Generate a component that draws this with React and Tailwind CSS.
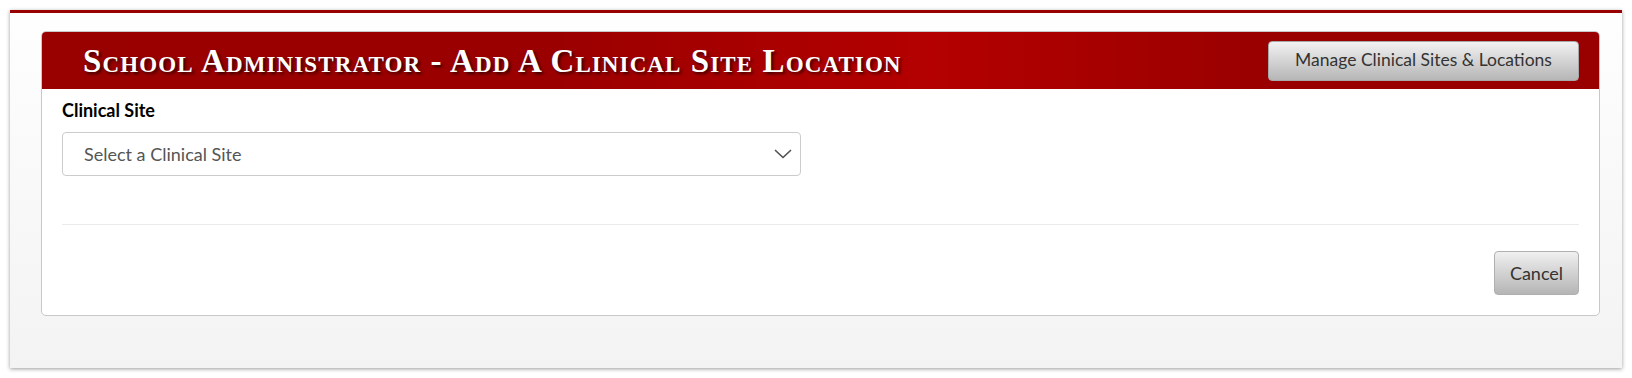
import React from "react";

export default function App() {
  return (
    <div className="w-[1632px] h-[378px] bg-white p-[10px]" style={{ fontFamily: "Lato, 'Liberation Sans', sans-serif" }}>
      <div className="h-[358px] border-t-[3px] border-[#990000] bg-gradient-to-b from-[#fefefe] to-[#f3f3f3] shadow-[0_1px_4px_rgba(0,0,0,0.4)] pl-[31px] pr-[22px] pt-[18px]">
        <div className="rounded-[5px] border border-[#c8c8c8] bg-white overflow-hidden">
          <div className="h-[57px] flex items-center justify-between pl-[41px] pr-[20px] bg-[linear-gradient(to_right,#990000_0%,#9b0000_33%,#b40000_57%,#990000_79%,#990000_100%)]">
            <h1
              className="text-white text-[33px] font-bold leading-none tracking-[1.1px] [font-variant:small-caps] [text-shadow:2px_2px_3px_rgba(0,0,0,0.65)] pt-[2px]"
              style={{ fontFamily: "'Liberation Serif', serif" }}
            >
              School Administrator - Add A Clinical Site Location
            </h1>
            <button className="h-[40px] w-[311px] rounded-[4px] bg-gradient-to-b from-[#f2f2f2] to-[#b6b6b6] text-[#333] text-[17.5px] border border-[#a8a8a8]">
              Manage Clinical Sites &amp; Locations
            </button>
          </div>
          <div className="px-[20px] pt-[10px] pb-[20px]">
            <label className="block text-[18px] font-bold text-black leading-[23px] mb-[10px]">Clinical Site</label>
            <div className="w-[739px] h-[44px] rounded-[4px] border border-[#cccccc] flex items-center justify-between pl-[21px] pr-[8px] text-[#555] text-[18px]">
              <span>Select a Clinical Site</span>
              <svg width="18" height="10" viewBox="0 0 18 10" fill="none" stroke="#555" strokeWidth="1.7" strokeLinecap="round" strokeLinejoin="round">
                <path d="M1.5 1.5 L9 8.5 L16.5 1.5" />
              </svg>
            </div>
            <div className="mt-[48px] h-px bg-[#eaeaea]" />
            <div className="mt-[26px] flex justify-end">
              <button className="h-[44px] w-[85px] rounded-[4px] bg-gradient-to-b from-[#f0f0f0] to-[#b5b5b5] border border-[#b0b0b0] text-[#333] text-[18px]">
                Cancel
              </button>
            </div>
          </div>
        </div>
      </div>
    </div>
  );
}
